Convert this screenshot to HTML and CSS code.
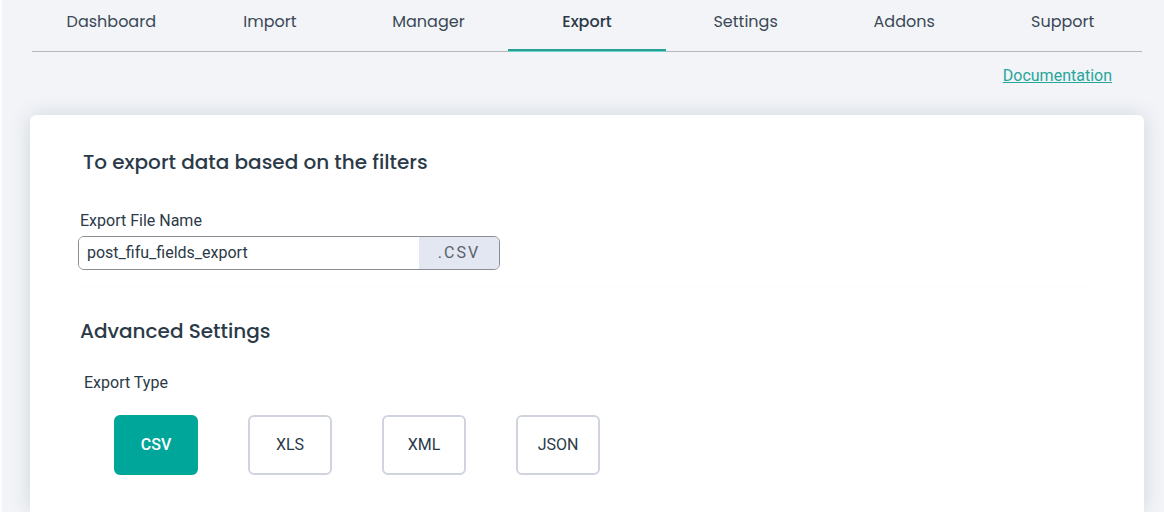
FILE: index.html
```html
<!DOCTYPE html>
<html lang="en">
<head>
    <meta charset="UTF-8">
    <meta name="viewport" content="width=device-width, initial-scale=1.0">
    <title>Export</title>
    <link rel="stylesheet" href="styles.css">
</head>
<body>
    <nav class="tabs">
        <a class="tab" href="#dashboard">Dashboard</a>
        <a class="tab" href="#import">Import</a>
        <a class="tab" href="#manager">Manager</a>
        <a class="tab active" href="#export" aria-current="page">Export</a>
        <a class="tab" href="#settings">Settings</a>
        <a class="tab" href="#addons">Addons</a>
        <a class="tab" href="#support">Support</a>
    </nav>
    <div class="doc-row">
        <a class="doc-link" href="#documentation">Documentation</a>
    </div>
    <main class="card">
        <h1 class="card-title">To export data based on the filters</h1>
        <section class="file-section">
            <label class="file-label" for="fileName">Export File Name</label>
            <div class="file-group">
                <input class="file-input" type="text" id="fileName" value="post_fifu_fields_export" spellcheck="false">
                <span class="file-ext">.CSV</span>
            </div>
        </section>
        <section class="advanced">
            <h2 class="section-title">Advanced Settings</h2>
            <p class="type-label" id="typeLabel">Export Type</p>
            <div class="types" role="group" aria-labelledby="typeLabel">
                <button class="type selected" type="button" aria-pressed="true">CSV</button>
                <button class="type" type="button" aria-pressed="false">XLS</button>
                <button class="type" type="button" aria-pressed="false">XML</button>
                <button class="type" type="button" aria-pressed="false">JSON</button>
            </div>
        </section>
    </main>
</body>
</html>
```

FILE: styles.css
```css
* {
    box-sizing: border-box;
}
body {
    margin: 0;
    padding: 0 20px 0 28px;
    border-left: 2px solid #fdfdfe;
    background-color: #f2f4f8;
    color: #2b3a48;
    font-family: Roboto, "Liberation Sans", sans-serif;
    font-size: 16px;
    line-height: 24px;
}
.tabs {
    display: flex;
    margin: 0 2px;
    border-bottom: 1px solid #b4b8be;
    font-family: Poppins, Inter, sans-serif;
}
.tab {
    flex: 1;
    height: 51px;
    padding-top: 10px;
    border-bottom: 2px solid transparent;
    color: #3a4856;
    text-align: center;
    text-decoration: none;
}
.tab.active {
    border-bottom-color: #26a095;
    box-shadow: 0 1px 0 #6fd3ca;
    color: #2b3a48;
    font-weight: 500;
}
.doc-row {
    display: flex;
    justify-content: flex-end;
    padding: 12px 32px 27px 0;
}
.doc-link {
    color: #26a69a;
}
.card {
    padding: 32px 50px 37px;
    border-radius: 6px 6px 0 0;
    background-color: #fff;
    box-shadow: 0 0 20px rgba(40, 60, 70, 0.16);
}
.card-title,
.section-title {
    margin: 0;
    font-family: Poppins, Inter, sans-serif;
    font-size: 20px;
    font-weight: 500;
    line-height: 30px;
}
.card-title {
    padding-left: 3px;
}
.file-section {
    padding: 32px 0 16px;
    border-bottom: 1px solid #fcfcfd;
}
.file-label {
    display: block;
    margin-bottom: 3px;
}
.file-group {
    display: flex;
    width: 100%;
    max-width: 422px;
    height: 34px;
    margin-left: -2px;
    overflow: hidden;
    border: 1px solid #8a8d94;
    border-radius: 6px;
}
.file-input {
    flex: 1;
    min-width: 0;
    padding: 0 8px;
    border: 0;
    outline: none;
    background-color: #fff;
    color: #2b3a48;
    font: inherit;
}
.file-ext {
    width: 80px;
    background-color: #e2e7f1;
    color: #5a616b;
    letter-spacing: 2px;
    line-height: 32px;
    text-align: center;
}
.advanced {
    padding-top: 29px;
}
.type-label {
    margin: 25px 0 20px;
    padding-left: 4px;
}
.types {
    display: flex;
    flex-wrap: wrap;
    gap: 50px;
    padding-left: 34px;
}
.type {
    width: 84px;
    height: 60px;
    padding: 0;
    border: 2px solid #d0d4df;
    border-radius: 6px;
    background-color: #fff;
    color: #2b3a48;
    font: inherit;
    cursor: pointer;
}
.type.selected {
    border-color: #00a699;
    background-color: #00a699;
    color: #fff;
    font-weight: 500;
}
```
